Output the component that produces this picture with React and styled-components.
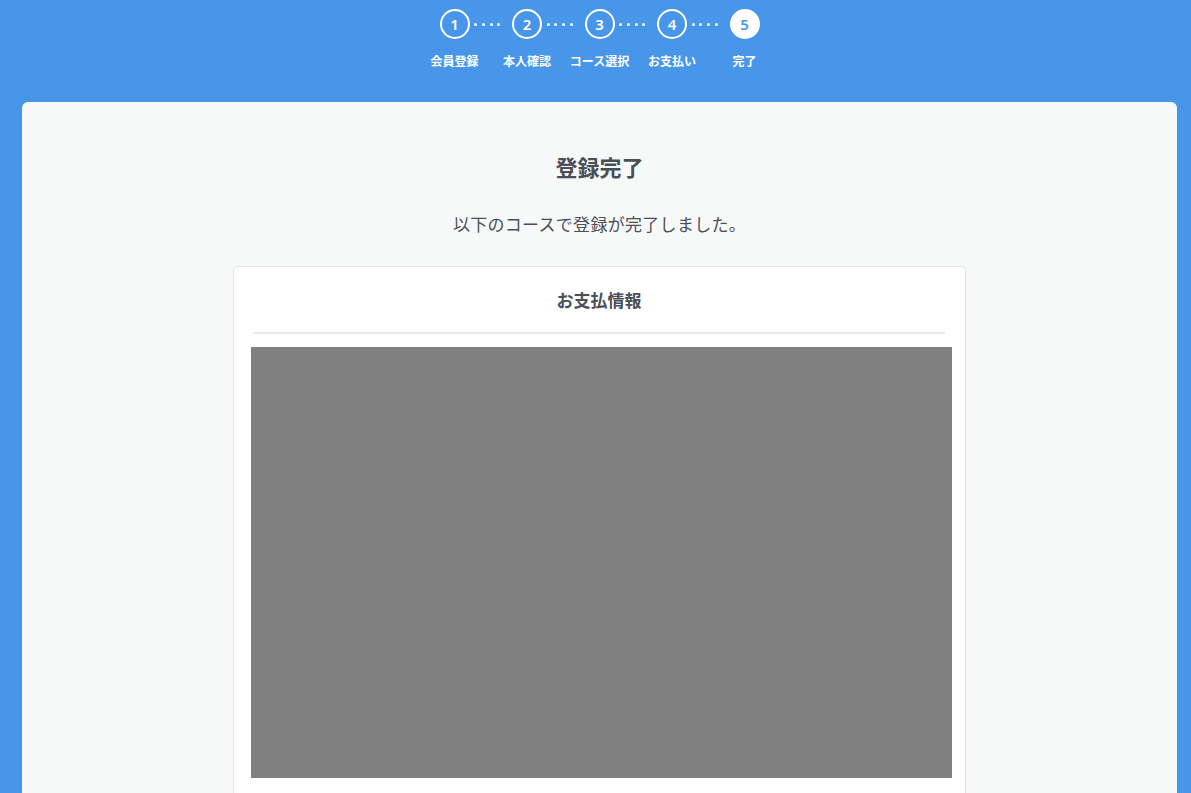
import React from "react";
import styled, { createGlobalStyle } from "styled-components";

const GlobalStyle = createGlobalStyle`
  html, body {
    margin: 0;
    padding: 0;
    background-color: #4796ea;
    font-family: "Noto Sans", "Noto Sans CJK JP", sans-serif;
  }
`;

const PageWrap = styled.div`
  min-height: 100vh;
  padding: 0 14px 0 22px;
  box-sizing: border-box;
  background-color: #4796ea;
`;

const StepBar = styled.div`
  display: flex;
  flex-direction: column;
  align-items: center;
  padding-top: 9px;
  height: 102px;
  box-sizing: border-box;
`;

const StepRow = styled.div`
  display: flex;
  align-items: flex-start;
`;

const StepItem = styled.div`
  width: 72.5px;
  display: flex;
  flex-direction: column;
  align-items: center;
  position: relative;
`;

const Circle = styled.div`
  width: 30px;
  height: 30px;
  border-radius: 50%;
  box-sizing: border-box;
  border: 2px solid #ffffff;
  background-color: ${(props) => (props.active ? "#ffffff" : "transparent")};
  color: ${(props) => (props.active ? "#4796ea" : "#ffffff")};
  display: flex;
  align-items: center;
  justify-content: center;
  font-size: 15px;
  font-weight: 600;
  line-height: 1;
`;

const Dots = styled.div`
  position: absolute;
  top: 13.5px;
  left: 56px;
  display: flex;
  gap: 4.7px;
`;

const Dot = styled.span`
  display: block;
  width: 3px;
  height: 3px;
  border-radius: 50%;
  background-color: #ffffff;
`;

const StepLabel = styled.div`
  margin-top: 15px;
  font-size: 12px;
  font-weight: 700;
  color: #ffffff;
  white-space: nowrap;
  line-height: 16px;
`;

const Card = styled.div`
  background-color: #f7f9f9;
  border-radius: 6px 6px 0 0;
  padding: 46px 0 0;
  min-height: 691px;
  box-sizing: border-box;
  display: flex;
  flex-direction: column;
  align-items: center;
`;

const Title = styled.h1`
  margin: 0;
  font-size: 22px;
  font-weight: 700;
  color: #4a4f57;
  line-height: 38px;
`;

const Lead = styled.p`
  margin: 25px 0 0;
  font-size: 17px;
  letter-spacing: 0.3px;
  color: #4a4f55;
  line-height: 28px;
`;

const InfoBox = styled.div`
  margin-top: 27px;
  width: 733px;
  background-color: #ffffff;
  border: 1px solid #dde3e6;
  border-bottom: none;
  border-radius: 5px 5px 0 0;
  padding: 0 13px 20px 17px;
  box-sizing: border-box;
`;

const InfoTitle = styled.h2`
  margin: 0 7px 0 2px;
  padding: 20px 0 17px;
  font-size: 17px;
  font-weight: 700;
  color: #4a4f57;
  text-align: center;
  line-height: 28px;
  border-bottom: 2px solid #e8ebec;
`;

const PaymentFrame = styled.div`
  margin-top: 13px;
  height: 431px;
  background-color: #808080;
`;

const steps = ["会員登録", "本人確認", "コース選択", "お支払い", "完了"];

const App = () => {
  return (
    <PageWrap>
      <GlobalStyle />
      <StepBar>
        <StepRow>
          {steps.map((label, i) => (
            <StepItem key={label}>
              <Circle active={i === steps.length - 1}>{i + 1}</Circle>
              {i < steps.length - 1 && (
                <Dots>
                  <Dot />
                  <Dot />
                  <Dot />
                  <Dot />
                </Dots>
              )}
              <StepLabel>{label}</StepLabel>
            </StepItem>
          ))}
        </StepRow>
      </StepBar>
      <Card>
        <Title>登録完了</Title>
        <Lead>以下のコースで登録が完了しました。</Lead>
        <InfoBox>
          <InfoTitle>お支払情報</InfoTitle>
          <PaymentFrame />
        </InfoBox>
      </Card>
    </PageWrap>
  );
};

export default App;
